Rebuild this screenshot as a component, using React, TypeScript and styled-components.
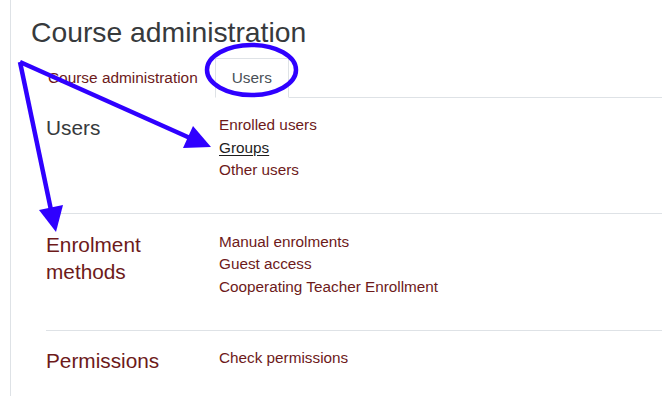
import styled, { createGlobalStyle } from "styled-components";

const GlobalStyle = createGlobalStyle`
  body {
    margin: 0;
    background: #fff;
    font-family: "Liberation Sans", Arial, sans-serif;
  }
`;

type Item = { label: string; hover?: boolean };
type Section = { title: string; link?: boolean; items: Item[] };

const sections: Section[] = [
  {
    title: "Users",
    items: [
      { label: "Enrolled users" },
      { label: "Groups", hover: true },
      { label: "Other users" },
    ],
  },
  {
    title: "Enrolment methods",
    link: true,
    items: [
      { label: "Manual enrolments" },
      { label: "Guest access" },
      { label: "Cooperating Teacher Enrollment" },
    ],
  },
  {
    title: "Permissions",
    link: true,
    items: [{ label: "Check permissions" }],
  },
];

export default function App() {
  return (
    <>
      <GlobalStyle />
      <Page>
        <Title>Course administration</Title>
        <TabList>
          <Tab>Course administration</Tab>
          <Tab $active>Users</Tab>
        </TabList>

        <Sections>
          {sections.map((section, i) => (
            <Row key={section.title} $first={i === 0}>
              <Heading $link={section.link}>{section.title}</Heading>
              <LinkList>
                {section.items.map((item) => (
                  <LinkItem key={item.label} $hover={item.hover}>
                    {item.label}
                  </LinkItem>
                ))}
              </LinkList>
            </Row>
          ))}
        </Sections>

        {/* annotation drawn over the screenshot */}
        <Annotations viewBox="0 0 662 396" width="662" height="396">
          <ellipse
            cx="251.5"
            cy="70"
            rx="44.5"
            ry="25"
            fill="none"
            stroke="#2f00ff"
            strokeWidth="4.5"
          />
          <line x1="20" y1="62" x2="190" y2="138" stroke="#2f00ff" strokeWidth="4.5" />
          <polygon points="211,147 183,148 193,126" fill="#2f00ff" />
          <line x1="20" y1="62" x2="51" y2="210" stroke="#2f00ff" strokeWidth="4.5" />
          <polygon points="56,232 39,210 63,205" fill="#2f00ff" />
        </Annotations>
      </Page>
    </>
  );
}

const Page = styled.div`
  position: relative;
  height: 396px;
  margin-left: 10px;
  padding: 16px 0 0 20px;
  box-sizing: border-box;
  border-left: 1px solid #dee2e6;
  overflow: hidden;
`;

const Title = styled.h2`
  margin: 0 0 8px;
  font-size: 28.3px;
  font-weight: 400;
  line-height: 33.6px;
  color: #373a3c;
`;

const TabList = styled.div`
  display: flex;
  border-bottom: 1px solid #dee2e6;
`;

const Tab = styled.div<{ $active?: boolean }>`
  display: flex;
  align-items: center;
  height: 40px;
  box-sizing: border-box;
  margin-bottom: -1px;
  padding: 0 16px;
  font-size: 15.4px;
  border: 1px solid transparent;
  background: #fff;
  color: ${(p) => (p.$active ? "#495057" : "#6d1a1a")};
  border-color: ${(p) => (p.$active ? "#dee2e6 #dee2e6 #fff" : "transparent")};
`;

const Sections = styled.div`
  padding-left: 15px;
`;

const Row = styled.div<{ $first?: boolean }>`
  display: flex;
  padding: 16.5px 0 31.5px;
  border-top: ${(p) => (p.$first ? "none" : "1px solid #dee2e6")};
`;

const Heading = styled.h3<{ $link?: boolean }>`
  width: 173px;
  flex-shrink: 0;
  margin: 0;
  font-size: 20.8px;
  font-weight: 400;
  line-height: 27px;
  color: ${(p) => (p.$link ? "#6d1a1a" : "#373a3c")};
`;

const LinkList = styled.ul`
  list-style: none;
  margin: 0;
  padding: 0;
`;

const LinkItem = styled.li<{ $hover?: boolean }>`
  font-size: 15.3px;
  line-height: 22.5px;
  color: ${(p) => (p.$hover ? "#1d1d1d" : "#6d1a1a")};
  text-decoration: ${(p) => (p.$hover ? "underline" : "none")};
  text-underline-offset: 2px;
`;

const Annotations = styled.svg`
  position: absolute;
  top: 0;
  left: -11px;
  pointer-events: none;
`;
